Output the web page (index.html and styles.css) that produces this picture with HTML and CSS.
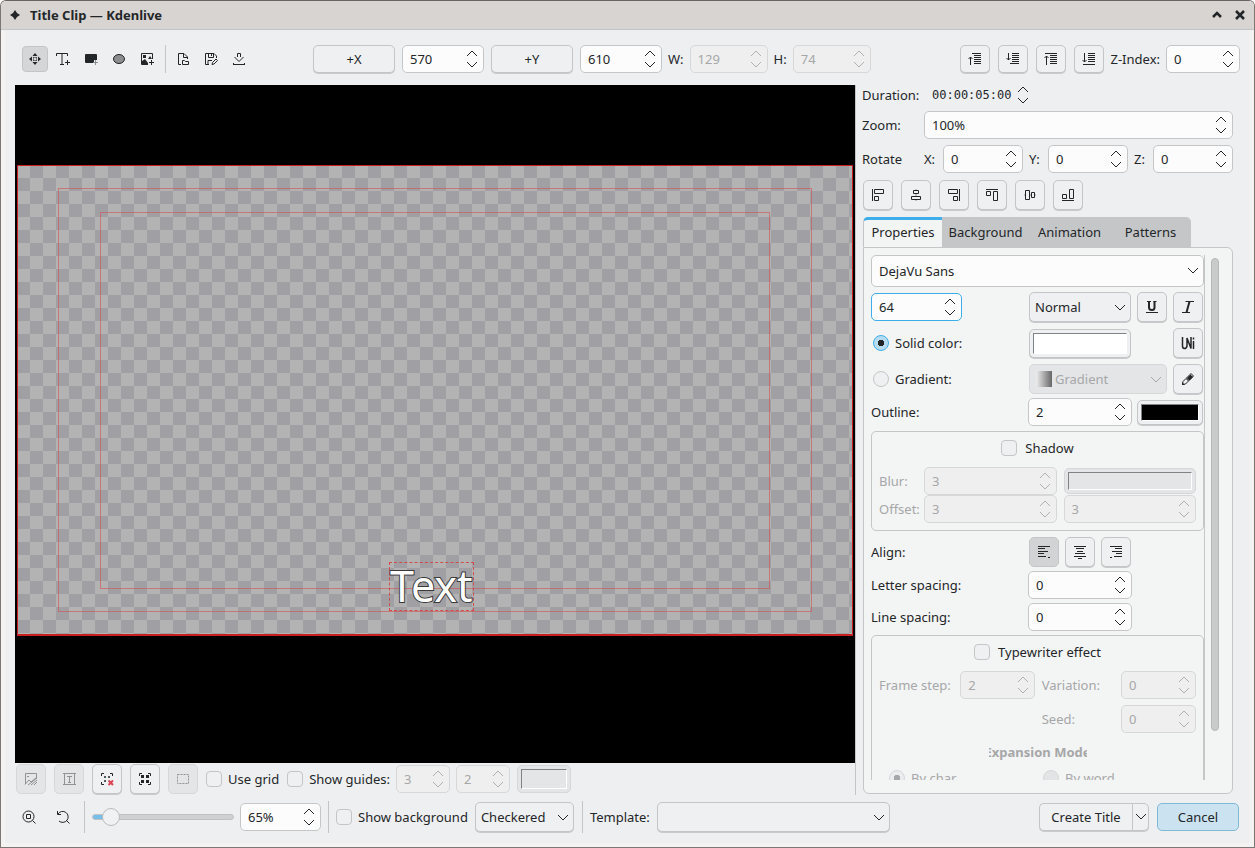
FILE: index.html
```html
<!DOCTYPE html>
<html lang="en">
<head>
<meta charset="utf-8">
<title>Title Clip — Kdenlive</title>
<link rel="stylesheet" href="styles.css">
</head>
<body>
<svg class="defs" aria-hidden="true">
  <symbol id="steps" viewBox="0 0 12 18"><path d="M1 6 6 1l5 5M1 12l5 5 5-5"/></symbol>
  <symbol id="down" viewBox="0 0 12 8"><path d="M1 1l5 5 5-5"/></symbol>
  <symbol id="raise" viewBox="0 0 16 16"><path d="M5 2.500h9M7 4.500h7M7 6.500h7M7 8.500h7M7 10.500h7M7 12.500h7M3.500 14V6M1.500 8l2-2 2 2"/></symbol>
  <symbol id="lower" viewBox="0 0 16 16"><path d="M7 2.500h7M7 4.500h7M7 6.500h7M7 8.500h7M7 10.500h7M5 12.500h9M3.500 2v7M1.500 7l2 2 2-2"/></symbol>
  <symbol id="raise-top" viewBox="0 0 16 16"><path d="M2 2.500h12M7 4.500h7M7 6.500h7M7 8.500h7M7 10.500h7M7 12.500h7M3.500 14V5M1.500 7l2-2 2 2"/></symbol>
  <symbol id="lower-bottom" viewBox="0 0 16 16"><path d="M7 2.500h7M7 4.500h7M7 6.500h7M7 8.500h7M7 10.500h7M2 13.500h12M3.500 2v9M1.500 9l2 2 2-2"/></symbol>
</svg>
<div class="window">
  <header class="titlebar">
    <svg class="app-icon" viewBox="0 0 10 10"><path d="M5 0l2 3 3 2-3 2-2 3-2-3-3-2 3-2z"/></svg>
    <h1>Title Clip — Kdenlive</h1>
    <button class="win" aria-label="Shade"><svg viewBox="0 0 10 10"><path d="M1 7l4-4 4 4"/></svg></button>
    <button class="win" aria-label="Close"><svg viewBox="0 0 10 10"><path d="M1 1l8 8M9 1 1 9"/></svg></button>
  </header>
  <main class="content">
    <div class="toolbar">
      <div class="tools">
        <button class="tool on" aria-label="Selection tool"><svg viewBox="0 0 16 16"><path class="f" d="M8 2l2.500 3h-5zM8 14l2.500-3h-5zM2 8l3-2.500v5zM14 8l-3-2.500v5z"/><path d="M6.500 7.500v-1h1M8.500 6.500h1v1M6.500 8.500v1h1M8.500 9.500h1v-1"/></svg></button>
        <button class="tool" aria-label="Add text"><svg viewBox="0 0 16 16"><path d="M1.500 5V2.500h11V5M7 2.500v11M5 13.500h4M12.500 9v5M10 11.500h5"/></svg></button>
        <button class="tool" aria-label="Add rectangle"><svg viewBox="0 0 16 16"><path class="f" d="M3 3h10a1 1 0 0 1 1 1v5h-3v3H3a1 1 0 0 1-1-1V4a1 1 0 0 1 1-1z"/><path class="g" d="M12.500 9v5M10 11.500h5"/></svg></button>
        <button class="tool" aria-label="Add ellipse"><svg viewBox="0 0 16 16"><ellipse class="ell" cx="8" cy="8" rx="5.500" ry="4.500"/></svg></button>
        <button class="tool" aria-label="Add image"><svg viewBox="0 0 16 16"><path d="M9 13.500H2.500v-11h11V8M12.500 9v5M10 11.500h5"/><path class="f" d="M3 13v-3l3-2 3 4v1zM4 4h3v3H4zM9 8l2-3 2 3z"/></svg></button>
        <span class="sep"></span>
        <button class="tool" aria-label="Open document"><svg viewBox="0 0 16 16"><path d="M6 13.500H3.500v-11H9l3.500 3.500v2M8.500 2.500v4h4M7.500 13.500v-4h2l1 1h3v3z"/></svg></button>
        <button class="tool" aria-label="Save as"><svg viewBox="0 0 16 16"><path d="M6 13.500H2.500v-11H11l2.500 2.500v2M5.500 3v3.500h5V3M8.500 3v2M5 13V9.500h4M9 13.500l.5-2 3.500-3.500 1.500 1.500-3.500 3.500z"/></svg></button>
        <button class="tool" aria-label="Download templates"><svg viewBox="0 0 16 16"><path d="M2 13.500h12M2.500 12v2M13.500 12v2M6.500 6V2.500h3V6M3.500 6 8 10.500 12.500 6"/></svg></button>
      </div>
      <div class="geometry">
        <button class="btn w82">+X</button>
        <span class="spin w82"><input type="text" value="570" aria-label="X position"><svg><use href="#steps"/></svg></span>
        <button class="btn w82">+Y</button>
        <span class="spin w82"><input type="text" value="610" aria-label="Y position"><svg><use href="#steps"/></svg></span>
        <label for="w">W:</label>
        <span class="spin w78"><input id="w" type="text" value="129" disabled><svg><use href="#steps"/></svg></span>
        <label for="h">H:</label>
        <span class="spin w78"><input id="h" type="text" value="74" disabled><svg><use href="#steps"/></svg></span>
      </div>
      <div class="order">
        <button class="btn icon low" aria-label="Raise"><svg><use href="#raise"/></svg></button>
        <button class="btn icon low" aria-label="Lower"><svg><use href="#lower"/></svg></button>
        <button class="btn icon low" aria-label="Raise to top"><svg><use href="#raise-top"/></svg></button>
        <button class="btn icon low" aria-label="Lower to bottom"><svg><use href="#lower-bottom"/></svg></button>
        <label for="z">Z-Index:</label>
        <span class="spin w74"><input id="z" type="text" value="0"><svg><use href="#steps"/></svg></span>
      </div>
    </div>

    <div class="split">
      <section class="left">
        <div class="canvas">
          <div class="stage">
            <div class="guide outer"></div>
            <div class="guide inner"></div>
            <div class="item">Text</div>
          </div>
        </div>
        <div class="view-options">
          <button class="btn icon" disabled aria-label="Fit background"><svg viewBox="0 0 16 16"><path d="M2.500 13V2.500h11V7M4 5.500h2M2 13.500 6 9l2 2 6-5M5 14l9-7M8 14l6-5M11 14l3-3"/></svg></button>
          <button class="btn icon" disabled aria-label="Text frame"><svg viewBox="0 0 16 16"><path d="M3.500 2v12M13.500 2v12M2 2.500h13M2 13.500h13M6 5.500h5M8.500 5v7M7 11.500h3"/></svg></button>
          <button class="btn icon" aria-label="Remove item"><svg viewBox="0 0 16 16"><path d="M2.500 5V2.500H5M11 2.500h2.500V5M2.500 11v2.500H5M5.500 5.500h1v1h-1zM9.500 5.500h1v1h-1zM5.500 9.500h1v1h-1z"/><path class="red" d="M9.500 9.500l4.500 4.500M14 9.500 9.500 14"/></svg></button>
          <button class="btn icon" aria-label="Select all"><svg viewBox="0 0 16 16"><path d="M2.500 5V2.500H5M11 2.500h2.500V5M2.500 11v2.500H5M11 13.500h2.500V11"/><path class="f" d="M4 4h3v3H4zM9 4h3v3H9zM4 9h3v3H4zM9 9h3v3H9z"/></svg></button>
          <button class="btn icon" disabled aria-label="Select none"><svg viewBox="0 0 16 16"><path stroke-dasharray="2 1" d="M2.500 3.500h11v9h-11z"/></svg></button>
          <label class="check"><input type="checkbox">Use grid</label>
          <label class="check"><input type="checkbox">Show guides:</label>
          <span class="spin w54"><input type="text" value="3" disabled aria-label="Horizontal guides"><svg><use href="#steps"/></svg></span>
          <span class="spin w54"><input type="text" value="2" disabled aria-label="Vertical guides"><svg><use href="#steps"/></svg></span>
          <button class="btn color w54" disabled aria-label="Guide color"><span></span></button>
        </div>
      </section>

      <aside class="side">
        <div class="line duration"><label for="dur">Duration:</label><span class="time"><input id="dur" type="text" value="00:00:05:00"><svg><use href="#steps"/></svg></span></div>
        <div class="line"><label for="zoom">Zoom:</label><span class="spin grow"><input id="zoom" type="text" value="100%"><svg><use href="#steps"/></svg></span></div>
        <div class="line rotate"><span class="name">Rotate</span>
          <label for="rx">X:</label><span class="spin grow"><input id="rx" type="text" value="0"><svg><use href="#steps"/></svg></span>
          <label for="ry">Y:</label><span class="spin grow"><input id="ry" type="text" value="0"><svg><use href="#steps"/></svg></span>
          <label for="rz">Z:</label><span class="spin grow"><input id="rz" type="text" value="0"><svg><use href="#steps"/></svg></span>
        </div>
        <div class="aligns">
          <button class="btn icon" aria-label="Align left"><svg viewBox="0 0 16 16"><path d="M2.500 2v12M4.500 2.500h9v4h-9zM4.500 9.500h4v4h-4z"/></svg></button>
          <button class="btn icon" aria-label="Center horizontally"><svg viewBox="0 0 16 16"><path d="M5.500 3.500h5v3h-5zM3.500 9.500h9v3h-9z"/><path class="g" d="M8 2v1M8 7v2M8 13v1"/></svg></button>
          <button class="btn icon" aria-label="Align right"><svg viewBox="0 0 16 16"><path d="M13.500 2v12M2.500 2.500h9v4h-9zM7.500 9.500h4v4h-4z"/></svg></button>
          <button class="btn icon" aria-label="Align top"><svg viewBox="0 0 16 16"><path d="M2 2.500h12M2.500 4.500h4v4h-4zM9.500 4.500h4v9h-4z"/></svg></button>
          <button class="btn icon" aria-label="Center vertically"><svg viewBox="0 0 16 16"><path d="M3.500 3.500h4v9h-4zM9.500 5.500h3v5h-3z"/><path class="g" d="M2 8h1M8 8h1M13 8h1"/></svg></button>
          <button class="btn icon" aria-label="Align bottom"><svg viewBox="0 0 16 16"><path d="M2 13.500h12M2.500 7.500h4v4h-4zM9.500 2.500h4v9h-4z"/></svg></button>
        </div>
        <div class="tabs" role="tablist">
          <button role="tab" aria-selected="true">Properties</button>
          <button role="tab">Background</button>
          <button role="tab">Animation</button>
          <button role="tab">Patterns</button>
        </div>
        <div class="panel">
          <div class="form">
            <span class="combo font white"><select aria-label="Font"><option>DejaVu Sans</option></select><svg><use href="#down"/></svg></span>
            <div class="row tall">
              <span class="spin size focus"><input type="text" value="64" aria-label="Font size"><svg><use href="#steps"/></svg></span>
              <span class="right">
                <span class="combo w102"><select aria-label="Font weight"><option>Normal</option></select><svg><use href="#down"/></svg></span>
                <button class="btn icon" aria-label="Underline"><svg viewBox="0 0 16 16"><path class="thick" d="M5 2v6.500q0 2.500 3 2.500 2.500 0 2.500-2.500V2"/><path d="M3 2.500h4M9.500 2.500h3M2 13.500h12"/></svg></button>
                <button class="btn icon" aria-label="Italic"><svg viewBox="0 0 16 16"><path class="thick" d="M9.500 2.500l-3 11"/><path d="M5.500 2.500H14M2 13.500h8"/></svg></button>
              </span>
            </div>
            <div class="row tall">
              <label class="check"><input type="radio" name="fill" checked>Solid color:</label>
              <span class="right">
                <button class="btn color w102 fill-white" aria-label="Text color"><span></span></button>
                <button class="btn icon last" aria-label="Insert Unicode character"><svg viewBox="0 0 16 16"><path class="mid" d="M2.500 2v9q0 2.500 2 2.500T7 11V3l4 10.500V2M13.500 6v8M13.500 2.500v2"/></svg></button>
              </span>
            </div>
            <div class="row tall">
              <label class="check"><input type="radio" name="fill">Gradient:</label>
              <span class="right">
                <span class="combo gradient grow"><i></i><select aria-label="Gradient" disabled><option>Gradient</option></select><svg><use href="#down"/></svg></span>
                <button class="btn icon" aria-label="Edit gradient"><svg viewBox="0 0 16 16"><path d="M2.500 13.500l.5-3L6 7.500 8.500 10l-3 3zM6.500 7 11 2.500 13.500 5 9 9.500z"/><path class="f" d="M7 7l3.500-3.500 2.500 2.500L9.500 9.500zM2 14v-3l3 3z"/></svg></button>
              </span>
            </div>
            <div class="row">
              <label for="outline">Outline:</label>
              <span class="right wide">
                <span class="spin w104"><input id="outline" type="text" value="2"><svg><use href="#steps"/></svg></span>
                <button class="btn color grow fill-black" aria-label="Outline color"><span></span></button>
              </span>
            </div>
            <fieldset class="group shadow">
              <label class="check"><input type="checkbox">Shadow</label>
              <div class="grid2 off">
                <label for="blur">Blur:</label>
                <span class="spin"><input id="blur" type="text" value="3" disabled><svg><use href="#steps"/></svg></span>
                <button class="btn color" disabled aria-label="Shadow color"><span></span></button>
                <label for="ox">Offset:</label>
                <span class="spin"><input id="ox" type="text" value="3" disabled><svg><use href="#steps"/></svg></span>
                <span class="spin"><input type="text" value="3" disabled aria-label="Vertical offset"><svg><use href="#steps"/></svg></span>
              </div>
            </fieldset>
            <div class="row tall">
              <span>Align:</span>
              <span class="right">
                <button class="btn icon pressed" aria-label="Align text left"><svg viewBox="0 0 16 16"><path d="M2 2.500h12M2 4.500h7M2 7.500h10M2 9.500h6M2 12.500h8M12 13.500h2"/></svg></button>
                <button class="btn icon" aria-label="Align text center"><svg viewBox="0 0 16 16"><path d="M2 2.500h12M4 4.500h8M5 7.500h6M3 9.500h10M2 12.500h12M6 14.500h4"/></svg></button>
                <button class="btn icon" aria-label="Align text right"><svg viewBox="0 0 16 16"><path d="M2 2.500h12M7 4.500h7M4 7.500h10M8 9.500h6M6 12.500h8M2 13.500h2"/></svg></button>
              </span>
            </div>
            <div class="row"><label for="ls">Letter spacing:</label><span class="right wide"><span class="spin w104"><input id="ls" type="text" value="0"><svg><use href="#steps"/></svg></span></span></div>
            <div class="row"><label for="lh">Line spacing:</label><span class="right wide"><span class="spin w104"><input id="lh" type="text" value="0"><svg><use href="#steps"/></svg></span></span></div>
            <fieldset class="group type">
              <label class="check"><input type="checkbox">Typewriter effect</label>
              <div class="grid4 off">
                <label for="fs">Frame step:</label>
                <span class="spin"><input id="fs" type="text" value="2" disabled><svg><use href="#steps"/></svg></span>
                <label for="var">Variation:</label>
                <span class="spin"><input id="var" type="text" value="0" disabled><svg><use href="#steps"/></svg></span>
                <label class="third" for="seed">Seed:</label>
                <span class="spin"><input id="seed" type="text" value="0" disabled><svg><use href="#steps"/></svg></span>
              </div>
              <div class="mode off"><span>Expansion Mode</span></div>
              <div class="modes off">
                <label class="check"><input type="radio" name="mode" checked disabled>By char</label>
                <label class="check"><input type="radio" name="mode" disabled>By word</label>
              </div>
            </fieldset>
          </div>
          <div class="scroll"></div>
        </div>
      </aside>
    </div>

    <footer class="bottom">
      <button class="tool" aria-label="Fit zoom"><svg viewBox="0 0 16 16"><circle cx="7.500" cy="7.500" r="5.500"/><path d="M11.500 11.500l3 3M5.500 5.500h4v4h-4z"/></svg></button>
      <button class="tool" aria-label="Original size"><svg viewBox="0 0 16 16"><path d="M3 5a5.500 5.500 0 1 1 1 7M11.500 11.500l3 3M2.500 2v3.500H6"/></svg></button>
      <span class="sep"></span>
      <input class="slider" type="range" min="0" max="100" value="7" aria-label="Zoom">
      <span class="spin w81"><input type="text" value="65%" aria-label="Zoom level"><svg><use href="#steps"/></svg></span>
      <span class="sep"></span>
      <label class="check"><input type="checkbox">Show background</label>
      <span class="combo w99"><select aria-label="Background pattern"><option>Checkered</option></select><svg><use href="#down"/></svg></span>
      <span class="sep"></span>
      <label for="tpl">Template:</label>
      <span class="combo w233"><select id="tpl"><option></option></select><svg><use href="#down"/></svg></span>
      <div class="actions">
        <span class="split-btn"><button class="btn create">Create Title</button><button class="btn more" aria-label="More actions"><svg><use href="#down"/></svg></button></span>
        <button class="btn w82 cancel">Cancel</button>
      </div>
    </footer>
  </main>
</div>
</body>
</html>
```
FILE: styles.css
```css
* { box-sizing: border-box; }
body { margin: 0; background: #fff; color: #232629; font: 13px/18px "Noto Sans", sans-serif; }
button, input, select { font: inherit; color: inherit; margin: 0; }
svg { fill: none; stroke: #232629; stroke-width: 1; flex: none; }
.defs { position: absolute; width: 0; height: 0; }
.f { fill: #232629; stroke: none; }
.g { stroke: #8b8d8f; }
.red { stroke: #da4453; stroke-width: 2; }
.thick { stroke-width: 2; }
.mid { stroke-width: 1.5; }
.ell { fill: #8b8d8f; }

.window { display: flex; flex-direction: column; height: 100vh; border: 1px solid #7a7775; border-top-color: #6a6462; border-radius: 6px 6px 0 0; background: #f4f3f2; overflow: hidden; }
.titlebar { display: flex; align-items: center; gap: 12px; height: 29px; flex: none; padding: 0 9px; background: #d8d4d1; border-bottom: 1px solid #c3c4c5; }
.titlebar h1 { flex: 1; margin: 0; font-size: 13px; font-weight: 700; }
.app-icon { width: 10px; height: 10px; fill: #232629; stroke: none; margin-right: -2px; }
.win { border: 0; padding: 0; background: none; width: 11px; height: 20px; display: grid; place-items: center; }
.win svg { width: 10px; height: 10px; stroke-width: 2.500; }
.content { flex: 1; min-height: 0; display: flex; flex-direction: column; margin: 0 4px 4px; padding: 15px 10px 10px; background: #eeeff1; }

.toolbar { display: flex; align-items: center; height: 28px; flex: none; margin-bottom: 12px; }
.tools { display: flex; align-items: center; gap: 2px; padding-left: 7px; }
.tool { width: 26px; height: 26px; padding: 0; display: grid; place-items: center; border: 1px solid transparent; border-radius: 4px; background: none; }
.tool svg, .icon svg { width: 16px; height: 16px; }
.tool.on { background: #d5d6d8; border-color: #c3c5c7; }
.sep { width: 1px; height: 32px; background: #c4c5c8; flex: none; }
.tools .sep { height: 28px; margin: 0 2px 0 3px; }
.geometry { display: flex; align-items: center; gap: 7px; margin-left: 61px; }
.geometry label { margin: 0 -1px; }
.order { display: flex; align-items: center; gap: 8px; margin-left: auto; }
.order label { margin: 0 -2px 0 -1px; }

.btn { height: 28px; padding: 0; border: 1px solid #c3c5c7; border-radius: 5px; background: #eff0f2; box-shadow: 0 1px #c8cacc; flex: none; text-align: center; }
.btn.icon { width: 30px; height: 30px; display: grid; place-items: center; }
.btn.icon.low { height: 28px; }
.btn:disabled { background: #e4e5e7; border-color: #d6d7d9; box-shadow: none; }
.btn:disabled svg { stroke: #909294; }
.btn.pressed { background: #d2d3d5; box-shadow: none; }
.spin { position: relative; display: flex; height: 28px; min-width: 0; flex: none; }
.spin input { width: 100%; min-width: 0; height: 100%; padding: 0 20px 0 7px; border: 1px solid #c4c6c8; border-radius: 5px; background: #fcfcfc; outline: 0; }
.spin svg { position: absolute; right: 6px; top: 5px; width: 12px; height: 18px; pointer-events: none; }
.spin input:disabled { background: #efefef; color: #a6a7a8; border-color: #d6d7d9; }
.spin input:disabled + svg { stroke: #b0b1b2; }
.spin.focus input { border-color: #3daee9; }
.combo { position: relative; display: flex; height: 30px; flex: none; }
.combo select { appearance: none; width: 100%; padding: 0 24px 0 5px; border: 1px solid #c3c5c7; border-radius: 5px; background: #eff0f2; box-shadow: 0 1px #c8cacc; }
.combo svg { position: absolute; right: 5px; top: 12px; width: 12px; height: 8px; pointer-events: none; }
.combo.white select { padding-left: 7px; background: #fcfcfc; box-shadow: none; }
.combo.font { height: 32px; margin-bottom: -1px; }
.combo select:disabled { background: #e4e5e7; color: #a6a7a8; border-color: #d6d7d9; opacity: 1; box-shadow: none; }
.combo select:disabled + svg { stroke: #a6a7a8; }
.combo.gradient select { padding-left: 25px; }
.gradient.grow { flex: 1; }
.gradient i { position: absolute; left: 7px; top: 7px; width: 16px; height: 16px; background: linear-gradient(90deg, #eee, #666); }
.w54 { width: 54px; } .w74 { width: 74px; } .w78 { width: 78px; } .w81 { width: 81px; } .w82 { width: 82px; }
.w99 { width: 99px; } .w102 { width: 102px; } .w104 { width: 104px; } .w233 { width: 233px; }
.grow { flex: 1; }
.color { padding: 3px; }
.color span { display: block; height: 100%; border: 1px solid #fff; border-top-color: #7f8388; border-left-color: #7f8388; }
.btn.fill-white { height: 29px; }
.fill-white span { background: #fff; }
.btn.fill-black { height: 25px; flex: 1; }
.fill-black span { background: #000; }

.check { display: flex; align-items: center; gap: 6px; white-space: nowrap; }
.check input { appearance: none; width: 16px; height: 16px; border: 1px solid #c3c5c7; border-radius: 4px; background: #eff0f2; }
.check input[type=radio] { border-radius: 50%; }
.check input[type=radio]:checked { border-color: #3daee9; background: radial-gradient(circle, #232629 3px, #b5dcf1 3.500px); }
.check input[type=radio]:disabled { background: #e3e4e6; border-color: #d6d7d9; }
.check input[type=radio]:checked:disabled { background: radial-gradient(circle, #a6a7a8 3px, #ebeced 3.500px); border-color: #d6d7d9; }
.off { color: #a6a7a8; }

.split { flex: 1; min-height: 0; display: grid; grid-template-columns: 1fr 385px; }
.left { display: flex; flex-direction: column; min-width: 0; }
.canvas { flex: 1; background: #000; padding: 80px 2px 0; min-height: 0; }
.stage { position: relative; aspect-ratio: 16 / 9; background: conic-gradient(#a09fa4 25%, #b3b3b3 0 50%, #a09fa4 0 75%, #b3b3b3 0) 0 0 / 26px 26px; box-shadow: inset 0 0 0 1px #c81e1e, 0 1px #c81e1e; }
.guide { position: absolute; border: 1px solid rgba(208, 80, 80, .6); }
.outer { inset: 4.9%; }
.inner { inset: 9.9%; }
.item { position: absolute; left: 44.5%; top: 84.5%; height: 49px; border: 1px dashed #d34a4a; color: #fff; font-size: 43px; line-height: 46px; -webkit-text-stroke: 2px #3a3a3a; paint-order: stroke fill; }
.view-options { display: flex; align-items: center; gap: 8px; height: 32px; flex: none; padding: 0 1px; }
.view-options .check ~ .check { margin-right: -2px; }
.view-options .spin + .spin { margin-left: -2px; }
.view-options .color { margin-left: -1px; }

.side { display: flex; flex-direction: column; min-height: 0; border-left: 1px solid #c4c5c8; padding: 0 7px 1px 7px; }
.line { display: flex; align-items: center; margin: 0 0 6px -1px; flex: none; }
.line > label:first-child, .name { width: 62px; }
.duration { height: 20px; }
.time { display: flex; align-items: center; padding-left: 8px; }
.time input { width: 85px; padding: 0; border: 0; background: none; font: 12px/18px "DejaVu Sans Mono", monospace; }
.time svg { width: 12px; height: 18px; }
.rotate { gap: 6px; }
.rotate .name { width: 56px; }
.rotate label { width: 13px; }
.aligns { display: flex; gap: 8px; margin-top: 1px; flex: none; }
.tabs { display: flex; flex: none; margin-top: 7px; }
.tabs button { height: 30px; width: 81px; padding: 0 0 4px; border: 0; border-top: 3px solid #c5c6c8; background: #c5c6c8; }
.tabs button:nth-child(2) { width: 87px; }
.tabs button:last-child { border-radius: 0 5px 0 0; }
.tabs button:first-child { width: 79px; border-top-color: #3daee9; border-left: 1px solid #c4c5c8; border-radius: 5px 0 0; background: #f3f4f4; }
.panel { flex: 1; min-height: 0; display: flex; border: 1px solid #c4c6c8; border-radius: 0 6px 6px; background: #f3f4f4; padding: 7px 13px 13px 7px; }
.form { flex: 1; min-width: 0; display: flex; flex-direction: column; gap: 4px; overflow: hidden; border-right: 1px solid #c4c6c8; }
.row { display: flex; align-items: center; justify-content: space-between; height: 28px; flex: none; }
.row.tall { height: 30px; margin-top: 2px; }
.row > .check { margin-left: 2px; }
.right { width: 175px; display: flex; align-items: center; gap: 6px; padding-right: 1px; }
.right.wide { width: 176px; gap: 5px; }
.size { width: 91px; }
.last { margin-left: auto; }
.group { margin: 0; border: 1px solid #c4c6c8; border-radius: 5px; padding: 7px; flex: none; min-width: 0; }
.group > .check { justify-content: center; height: 18px; gap: 8px; }
.group.type { height: 240px; }
.group.shadow { margin-top: 1px; }
.grid2 { display: grid; grid-template-columns: 38px 1fr 1fr; align-items: center; column-gap: 7px; margin-top: 10px; }
.grid2 label { margin-right: -7px; }
.grid2 .color { height: 26px; }
.grid4 { display: grid; grid-template-columns: 75px 75px 73px 75px; justify-content: space-between; align-items: center; row-gap: 6px; margin-top: 10px; }
.third { grid-column: 3; }
.mode { display: flex; justify-content: center; margin-top: 10px; font-weight: 700; }
.mode span { width: 98px; display: flex; justify-content: center; overflow: hidden; white-space: nowrap; }
.modes { display: grid; grid-template-columns: 154px 1fr; margin: 8px 0 0 10px; }
.scroll { width: 8px; height: 473px; margin: 3px 0 0 6px; background: #c9caca; border: 1px solid #b7b8b8; border-radius: 4px; }

.bottom { display: flex; align-items: center; flex: none; height: 32px; margin-top: 6px; gap: 7px; padding-left: 1px; }
.bottom .tool + .tool { margin-left: 1px; }
.bottom .sep { margin-left: 1px; }
.bottom .spin { margin-left: -1px; }
.bottom .spin + .sep { margin-left: 0; }
.slider { appearance: none; width: 142px; height: 18px; margin: 0; background: none; }
.slider::-webkit-slider-runnable-track { height: 6px; border: 1px solid #bfc1c3; border-radius: 3px; background: linear-gradient(90deg, #75bfe9 12%, #cfd0d2 12%); }
.slider::-webkit-slider-thumb { appearance: none; width: 18px; height: 18px; margin-top: -7px; border: 1px solid #b9bbbd; border-radius: 50%; background: #f0f1f3; }
.actions { display: flex; gap: 8px; margin-left: auto; padding-right: 1px; }
.split-btn { display: flex; }
.create { width: 93px; border-right: 0; border-radius: 5px 0 0 5px; }
.more { width: 17px; border-radius: 0 5px 5px 0; display: grid; place-items: center; }
.more svg { width: 12px; height: 8px; }
.cancel { background: #cbe3f0; border-color: #7fb9d8; box-shadow: none; }
```
